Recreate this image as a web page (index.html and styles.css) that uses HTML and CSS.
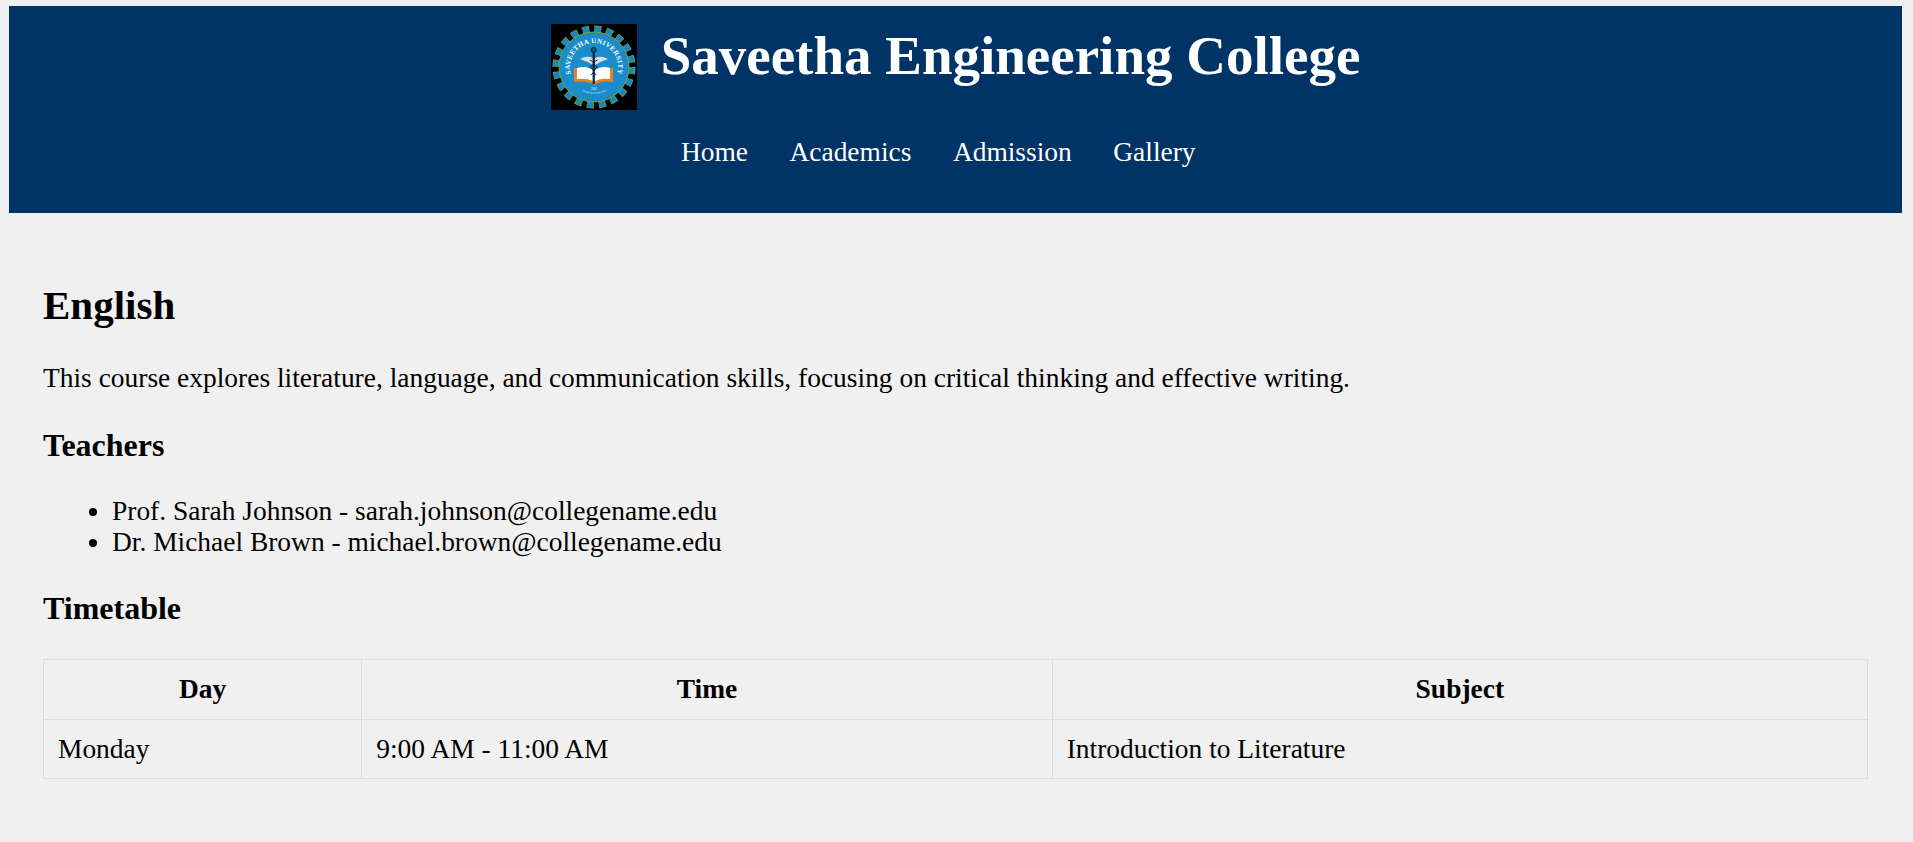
FILE: index.html
```html
<!DOCTYPE html>
<html lang="en">
<head>
<meta charset="utf-8">
<title>English - Saveetha Engineering College</title>
<link rel="stylesheet" href="styles.css">
</head>
<body>
<header class="site-header">
  <div class="brand">
    <svg class="logo" viewBox="0 0 86 86" role="img" aria-label="Saveetha University logo">
      <rect width="86" height="86" fill="#000"/>
      <circle cx="43" cy="43" r="38" fill="none" stroke="#7fa32c" stroke-width="7" stroke-dasharray="7 4.94"/>
      <circle cx="43" cy="43" r="37.8" fill="none" stroke="#1b86c4" stroke-width="6" stroke-dasharray="6 5.87" stroke-dashoffset="-0.5"/>
      <circle cx="43" cy="43" r="35" fill="#1b8ccb" stroke="#7fa32c" stroke-width="1"/>
      <circle cx="43" cy="43" r="34" fill="#1b8ccb"/>
      <defs>
        <path id="arc" d="M23.3 56.8 A24 24 0 1 1 62.7 56.8"/>
        <path id="arc-low" d="M24 62 A27 27 0 0 0 62 62"/>
      </defs>
      <text class="logo-text"><textPath href="#arc" startOffset="50%" text-anchor="middle">SAVEETHA UNIVERSITY</textPath></text>
      <text class="logo-small"><textPath href="#arc-low" startOffset="50%" text-anchor="middle">Saveetha Community</textPath></text>
      <text class="logo-year" x="43" y="66" text-anchor="middle">2001</text>
      <path d="M29 35 Q36 31 42 34 L42 41 Q35 37 29 35Z M57 35 Q50 31 44 34 L44 41 Q51 37 57 35Z" fill="#d8dde0"/>
      <path d="M23 44 L23 58 Q36 56 43 61 Q50 56 62 58 L62 44 L59 44 L59 55 Q49 54 43 58 Q37 54 26 55 L26 44Z" fill="#e8821e"/>
      <path d="M26 44 Q36 41 43 47 Q50 41 59 44 L59 55 Q49 54 43 58 Q37 54 26 55Z" fill="#fff"/>
      <rect x="41.6" y="24" width="2.2" height="36" fill="#123"/>
      <circle cx="42.7" cy="26" r="2.6" fill="#0c4f7a" stroke="#123"/>
      <path d="M39 36 Q46 39 39 43 Q46 47 40 51 M46.4 36 Q39 39 46.4 43 Q39 47 45.4 51" fill="none" stroke="#123" stroke-width="1"/>
    </svg>
    <h1 class="title">Saveetha Engineering College</h1>
  </div>
  <nav class="nav">
    <a href="#">Home</a>
    <a href="#">Academics</a>
    <a href="#">Admission</a>
    <a href="#">Gallery</a>
  </nav>
</header>
<main class="content">
  <h2 class="course">English</h2>
  <p class="intro">This course explores literature, language, and communication skills, focusing on critical thinking and effective writing.</p>
  <h3 class="section">Teachers</h3>
  <ul class="teachers">
    <li>Prof. Sarah Johnson - sarah.johnson@collegename.edu</li>
    <li>Dr. Michael Brown - michael.brown@collegename.edu</li>
  </ul>
  <h3 class="section">Timetable</h3>
  <table class="timetable">
    <colgroup><col class="c-day"><col class="c-time"><col class="c-subject"></colgroup>
    <tr><th>Day</th><th>Time</th><th>Subject</th></tr>
    <tr><td>Monday</td><td>9:00 AM - 11:00 AM</td><td>Introduction to Literature</td></tr>
  </table>
</main>
</body>
</html>
```
FILE: styles.css
```css
html { background: #f0f0f0; }
body {
  margin: 6px 11px 0 9px;
  font-family: "Liberation Serif", "Times New Roman", serif;
  font-size: 27.45px;
  color: #000;
  background: #f0f0f0;
}
.site-header {
  background: #003366;
  color: #fff;
  height: 207px;
  padding-top: 18px;
  box-sizing: border-box;
}
.brand {
  display: flex;
  justify-content: center;
  align-items: flex-start;
  gap: 24px;
}
.logo { width: 86px; height: 86px; display: block; flex: none; }
.logo-text { font: bold 7px "Liberation Serif", serif; fill: #fff; letter-spacing: .3px; }
.logo-small { font: 2.6px "Liberation Sans", sans-serif; fill: #cfe6f5; }
.logo-year { font: 2.6px "Liberation Sans", sans-serif; fill: #e6f2fa; }
.title {
  margin: 0;
  font-size: 55px;
  line-height: 64px;
  font-weight: bold;
}
.nav {
  display: flex;
  justify-content: center;
  margin-top: 27px;
  padding-left: 7px;
}
.nav a {
  color: #fff;
  text-decoration: none;
  margin-right: 41.5px;
}
.content { padding: 0 34px; }
.course {
  margin: 0;
  padding-top: 69px;
  font-size: 41px;
  line-height: 46px;
}
.intro { margin: 35px 0 0; padding-bottom: 2px; line-height: 31px; }
.section { margin: 31px 0 0; font-size: 32px; line-height: 36px; }
.teachers { margin: 33px 0 0; padding: 0 0 1px 69px; line-height: 31px; }
.timetable {
  width: 100%;
  margin-top: 33px;
  border-collapse: collapse;
}
.c-day { width: 17.45%; }
.c-time { width: 37.85%; }
.c-subject { width: 44.7%; }
.timetable th, .timetable td {
  border: 1px solid #ddd;
  padding: 14px;
  line-height: 30.5px;
}
.timetable th { text-align: center; }
.timetable td { text-align: left; }
```
